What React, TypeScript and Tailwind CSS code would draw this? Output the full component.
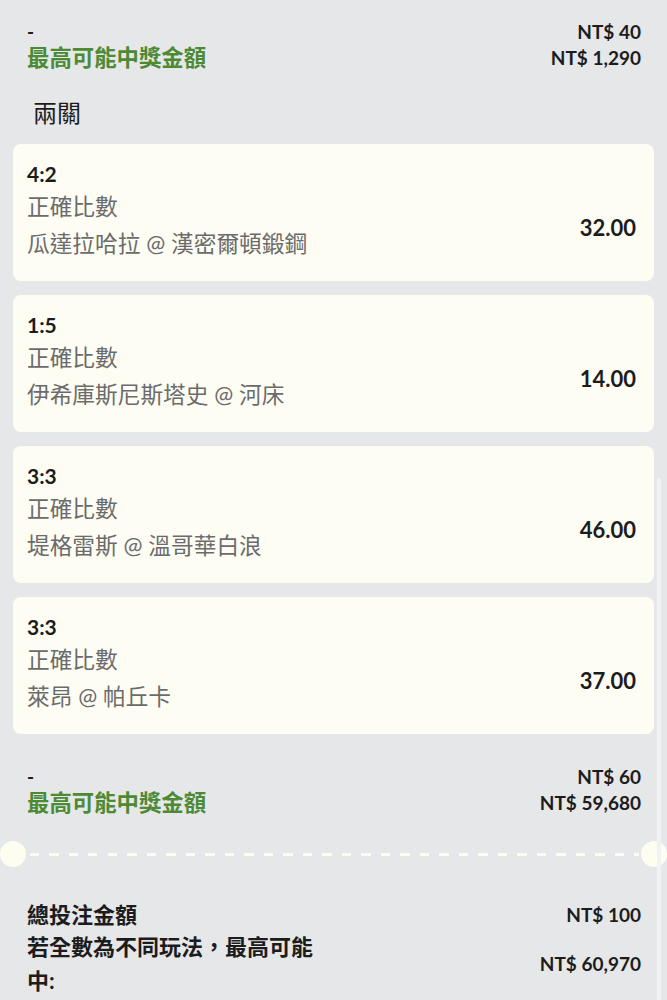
type Leg = {
  score: string;
  market: string;
  match: string;
  odds: string;
};

const legs: Leg[] = [
  { score: "4:2", market: "正確比數", match: "瓜達拉哈拉 @ 漢密爾頓鍛鋼", odds: "32.00" },
  { score: "1:5", market: "正確比數", match: "伊希庫斯尼斯塔史 @ 河床", odds: "14.00" },
  { score: "3:3", market: "正確比數", match: "堤格雷斯 @ 溫哥華白浪", odds: "46.00" },
  { score: "3:3", market: "正確比數", match: "萊昂 @ 帕丘卡", odds: "37.00" },
];

function StakeSummary({ stake, payout }: { stake: string; payout: string }) {
  return (
    <div className="pl-[27px] pr-[26px]">
      <div className="flex justify-between text-[19px] font-bold leading-[26px] text-[#1c1c1c]">
        <span>-</span>
        <span>{stake}</span>
      </div>
      <div className="flex justify-between leading-[26px]">
        <span className="text-[22.4px] font-bold text-[#4d8a34]">最高可能中獎金額</span>
        <span className="text-[19px] font-bold text-[#1c1c1c]">{payout}</span>
      </div>
    </div>
  );
}

function LegCard({ leg }: { leg: Leg }) {
  return (
    <div className="flex h-[137px] justify-between rounded-lg bg-[#fdfdf4] pl-[14px] pr-[18px] pt-[14px]">
      <div>
        <div className="text-[21px] font-bold leading-[32px] text-[#1c1c1c]">{leg.score}</div>
        <div className="text-[22.7px] leading-[34px] text-[#6b6b6b]">{leg.market}</div>
        <div className="text-[22.7px] leading-[40px] text-[#6b6b6b]">{leg.match}</div>
      </div>
      <div className="pt-[55px] text-[22px] font-bold leading-[30px] text-[#1c1c1c]">{leg.odds}</div>
    </div>
  );
}

export default function App() {
  return (
    <div className="relative min-h-screen bg-[#e6e7e9] pt-[19px] font-[Lato,'Noto_Sans_CJK_TC',sans-serif]">
      <StakeSummary stake="NT$ 40" payout="NT$ 1,290" />

      <div className="mt-[27px] pl-[33px] text-[24px] leading-[30px] text-[#1c1c1c]">兩關</div>

      <div className="mx-[13px] mt-[16px] flex flex-col gap-[14px]">
        {legs.map((leg, i) => (
          <LegCard key={i} leg={leg} />
        ))}
      </div>

      <div className="mt-[30px]">
        <StakeSummary stake="NT$ 60" payout="NT$ 59,680" />
      </div>

      <div className="mt-[25px] flex h-[26px] items-center">
        <div className="h-[26px] w-[26px] shrink-0 rounded-full bg-[#fdfdf0]" />
        <div className="ml-[4px] mr-[2px] h-[3px] flex-1 bg-[repeating-linear-gradient(90deg,#fdfdf0_0_9px,transparent_9px_19.5px)]" />
        <div className="h-[26px] w-[26px] shrink-0 rounded-full bg-[#fdfdf0]" />
      </div>

      <div className="pb-6 pl-[27px] pr-[26px] pt-[33px]">
        <div className="flex items-center justify-between leading-[30px]">
          <span className="text-[22px] font-bold text-[#1c1c1c]">總投注金額</span>
          <span className="text-[19px] font-bold text-[#1c1c1c]">NT$ 100</span>
        </div>
        <div className="flex items-center justify-between">
          <span className="w-[295px] text-[22px] font-bold leading-[34px] text-[#1c1c1c]">
            若全數為不同玩法，最高可能中:
          </span>
          <span className="text-[19px] font-bold text-[#1c1c1c]">NT$ 60,970</span>
        </div>
      </div>

      {/* scrollbar */}
      <div className="absolute right-[6px] top-[478px] h-[540px] w-[4px] rounded-full bg-[#f1f2f4]" />
    </div>
  );
}
